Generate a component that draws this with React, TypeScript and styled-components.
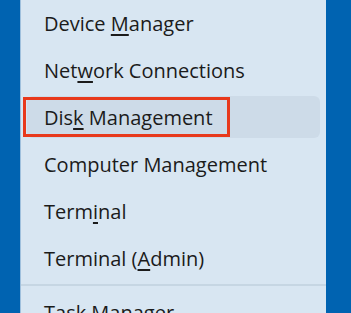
import React from "react";
import styled, { createGlobalStyle } from "styled-components";

const Global = createGlobalStyle`
  html, body { margin: 0; padding: 0; background: #0063b1; }
  body { width: 351px; height: 313px; overflow: hidden; }
`;

const Page = styled.div`
  display: flex;
  width: 351px;
  height: 313px;
  background: #0063b1;
  overflow: hidden;
`;

const Menu = styled.div`
  margin-left: 20px;
  width: 306px;
  height: 313px;
  box-sizing: border-box;
  background: #d8e6f2;
  border-left: 1px solid #9fc0dd;
  padding: 2px 6px 0 6px;
  display: flex;
  flex-direction: column;
  gap: 5px;
  font-family: "Segoe UI", "Open Sans", "Noto Sans", sans-serif;
  color: #1b1b1b;
`;

const Item = styled.div<{ $active?: boolean }>`
  position: relative;
  flex: none;
  height: 42px;
  border-radius: 6px;
  background: ${(p) => (p.$active ? "#cddbe8" : "transparent")};
  display: flex;
  align-items: center;
  padding-left: 17px;
  font-size: 20px;
  white-space: nowrap;
`;

const Label = styled.span`
  white-space: pre;
`;

const Key = styled.span`
  text-decoration: underline;
  text-decoration-thickness: 1.5px;
  text-underline-offset: 3px;
`;

const Separator = styled.div`
  flex: none;
  height: 2px;
  margin: 0 -6px;
  background: #c6d6e3;
`;

const Highlight = styled.div`
  position: absolute;
  left: -4px;
  top: 1px;
  width: 207px;
  height: 40px;
  box-sizing: border-box;
  border: 3px solid #e8391c;
  pointer-events: none;
`;

export default function App() {
  return (
    <Page>
      <Global />
      <Menu>
        <Item><Label>Device <Key>M</Key>anager</Label></Item>
        <Item><Label>Net<Key>w</Key>ork Connections</Label></Item>
        <Item $active>
          <Label>Dis<Key>k</Key> Management</Label>
          <Highlight />
        </Item>
        <Item><Label>Computer Mana<Key>g</Key>ement</Label></Item>
        <Item><Label>Term<Key>i</Key>nal</Label></Item>
        <Item><Label>Terminal (<Key>A</Key>dmin)</Label></Item>
        <Separator />
        <Item><Label><Key>T</Key>ask Manager</Label></Item>
      </Menu>
    </Page>
  );
}
